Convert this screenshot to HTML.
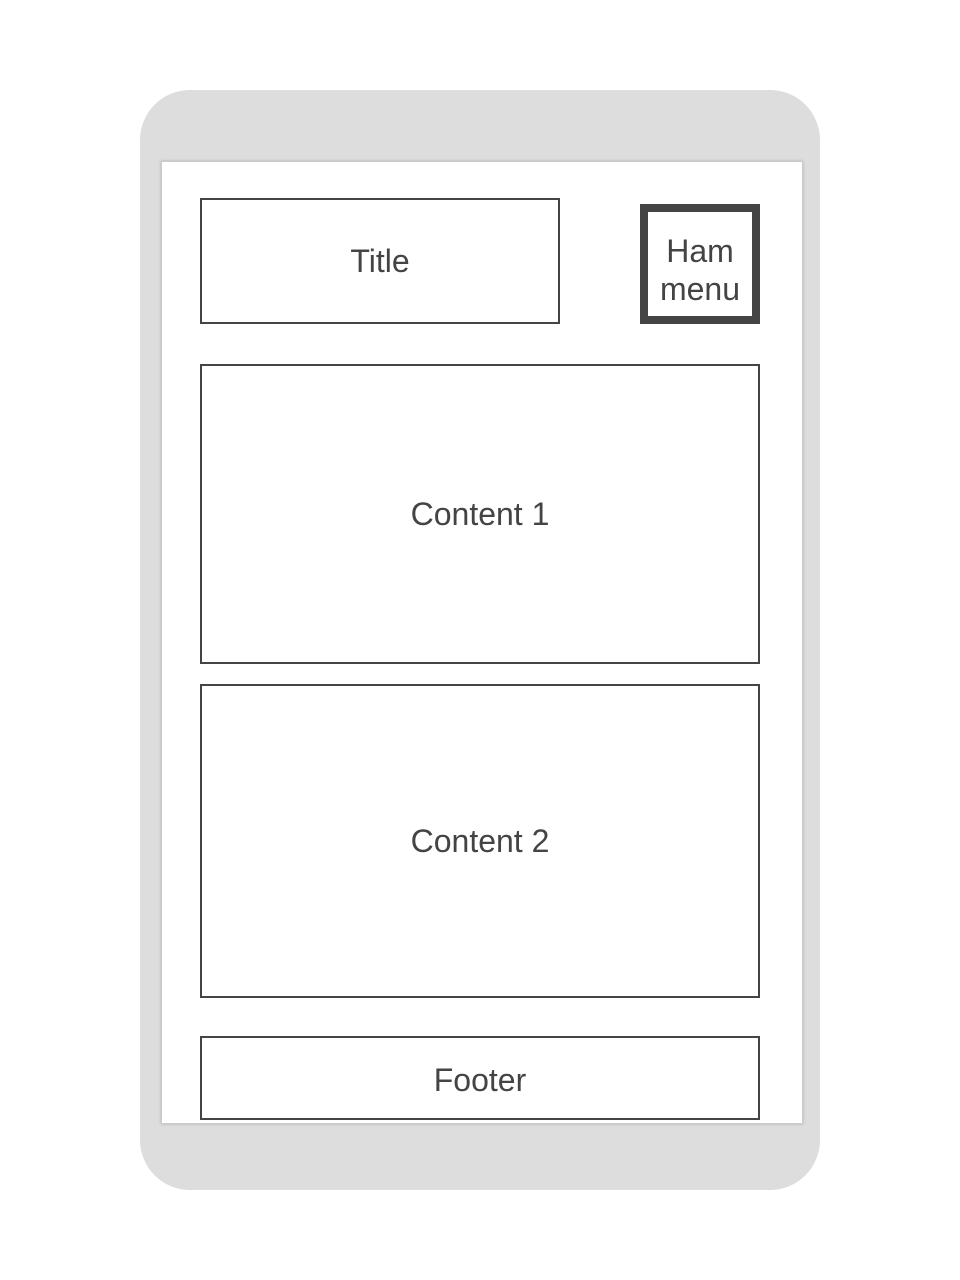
<!DOCTYPE html>
<html><head><style>
body{margin:0;width:960px;height:1280px;background:#fff;position:relative;font-family:"Liberation Sans",sans-serif;color:#444;}
.phone{position:absolute;left:140px;top:90px;width:680px;height:1100px;background:#ddd;border-radius:50px;}
.screen{position:absolute;left:161px;top:161px;width:640px;height:961px;background:#fff;border:1px solid #ccc;box-shadow:0 0 3px rgba(0,0,0,0.2);}
.b{position:absolute;box-sizing:border-box;border:2px solid #444;display:flex;align-items:center;justify-content:center;text-align:center;font-size:32px;line-height:38px;background:#fff;}
</style></head><body>
<div class="phone"></div>
<div class="screen"></div>
<div class="b" style="left:200px;top:198px;width:360px;height:126px;">Title</div>
<div class="b" style="left:640px;top:204px;width:120px;height:120px;border-width:8px;padding-top:12px;">Ham<br>menu</div>
<div class="b" style="left:200px;top:364px;width:560px;height:300px;">Content 1</div>
<div class="b" style="left:200px;top:684px;width:560px;height:314px;">Content 2</div>
<div class="b" style="left:200px;top:1036px;width:560px;height:84px;padding-top:3px;">Footer</div>
</body></html>
